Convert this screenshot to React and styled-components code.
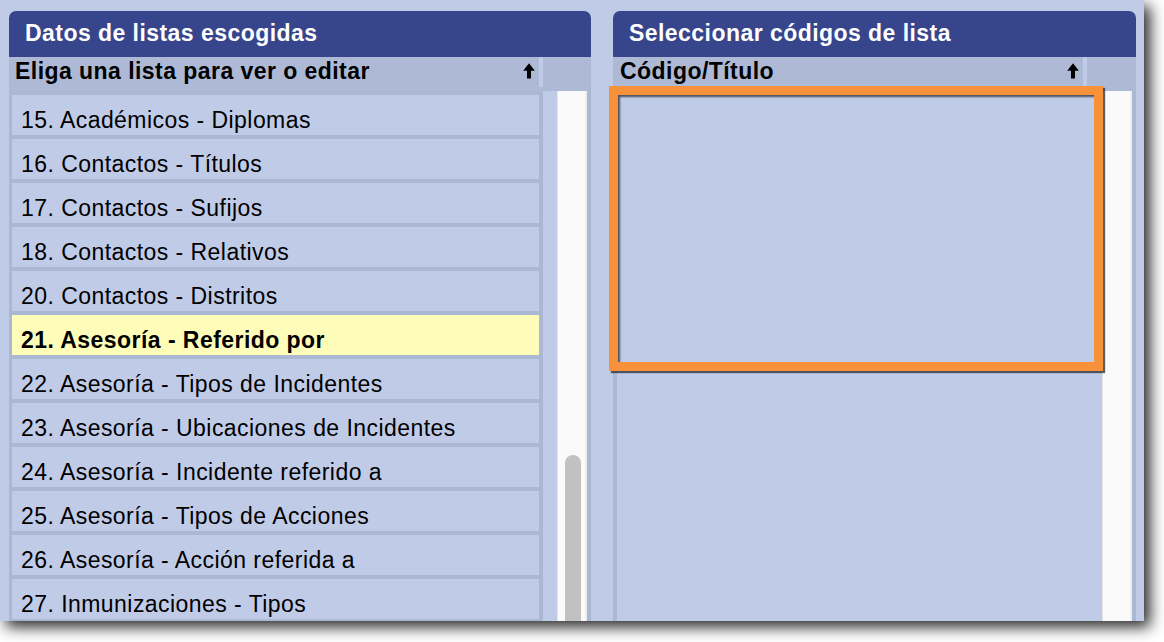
import React from "react";
import styled, { createGlobalStyle } from "styled-components";

const GlobalStyle = createGlobalStyle`
  html, body {
    margin: 0;
    padding: 0;
    background: #ffffff;
  }
  body {
    font-family: "Liberation Sans", Arial, sans-serif;
  }
`;

const lists = [
  "15. Académicos - Diplomas",
  "16. Contactos - Títulos",
  "17. Contactos - Sufijos",
  "18. Contactos - Relativos",
  "20. Contactos - Distritos",
  "21. Asesoría - Referido por",
  "22. Asesoría - Tipos de Incidentes",
  "23. Asesoría - Ubicaciones de Incidentes",
  "24. Asesoría - Incidente referido a",
  "25. Asesoría - Tipos de Acciones",
  "26. Asesoría - Acción referida a",
  "27. Inmunizaciones - Tipos",
];

const Page = styled.div`
  width: 1164px;
  height: 642px;
  overflow: hidden;
`;

const Window = styled.div`
  position: relative;
  width: 1144px;
  height: 621px;
  box-sizing: border-box;
  padding: 11px 8px 0 9px;
  background: #c0cbe8;
  box-shadow: 6px 6px 14px rgba(0, 0, 0, 0.85);
  overflow: hidden;
  display: grid;
  grid-template-columns: 582px 523px;
  column-gap: 22px;
`;

const Panel = styled.section`
  display: flex;
  flex-direction: column;
  min-height: 0;
`;

const TitleBar = styled.header`
  height: 46px;
  flex-shrink: 0;
  display: flex;
  align-items: center;
  padding: 0 16px 1px;
  box-sizing: border-box;
  background: #36458c;
  border-radius: 7px 7px 0 0;
  color: #ffffff;
  font-size: 23px;
  font-weight: 700;
  letter-spacing: 0.45px;
`;

const ColumnHeader = styled.div`
  height: 34px;
  flex-shrink: 0;
  display: flex;
  align-items: flex-start;
  background: #aeb9d5;
`;

const HeaderCell = styled.div`
  width: ${(p) => p.$width}px;
  height: 30px;
  box-sizing: border-box;
  display: flex;
  align-items: center;
  justify-content: space-between;
  padding: 0 4px 2px ${(p) => p.$indent}px;
  color: #000000;
  font-size: 23px;
  font-weight: 700;
  letter-spacing: 0.45px;
  white-space: nowrap;
`;

const Separator = styled.div`
  width: 4px;
  height: 30px;
  background: #bfcae8;
`;

const SortArrow = styled.svg`
  width: 12px;
  height: 16px;
  margin-bottom: 1px;
  flex-shrink: 0;
`;

const Body = styled.div`
  flex: 1;
  min-height: 0;
  display: flex;
`;

const ListArea = styled.div`
  width: 534px;
  box-sizing: border-box;
  padding: 4px 4px 0 3px;
  display: flex;
  flex-direction: column;
  gap: 4px;
  background: #acb7d3;
  overflow: hidden;
`;

const Row = styled.div`
  height: 40px;
  flex-shrink: 0;
  box-sizing: border-box;
  display: flex;
  align-items: center;
  padding: 10px 8px 0 9px;
  background: ${(p) => (p.$selected ? "#fefcb9" : "#c0cbe8")};
  color: #000000;
  font-size: 23px;
  font-weight: ${(p) => (p.$selected ? 700 : 400)};
  letter-spacing: 0.45px;
  white-space: nowrap;
`;

const Gutter = styled.div`
  width: 14px;
  background: #c0cbe8;
`;

const EdgeBorder = styled.div`
  width: 4px;
  background: #acb7d3;
`;

const EmptyList = styled.div`
  flex: 1;
  background: #c0cbe8;
`;

const Track = styled.div`
  width: 30px;
  box-sizing: border-box;
  padding: ${(p) => p.$thumbTop}px 0 0 8px;
  background: #fafafa;
  box-shadow: inset 1px 0 0 #e4e4e4, inset -2px 0 0 #efefef;
`;

const Thumb = styled.div`
  width: 16px;
  height: 100%;
  background: #c1c1c1;
  border-radius: 8px 8px 0 0;
`;

const Highlight = styled.div`
  position: absolute;
  left: 609px;
  top: 86px;
  width: 494px;
  height: 285px;
  box-sizing: border-box;
  border: 9px solid #f8923a;
  box-shadow: 2px 2px 1px rgba(40, 40, 50, 0.75),
    inset 2px 2px 2px rgba(40, 40, 50, 0.75);
  pointer-events: none;
`;

const Arrow = () => (
  <SortArrow viewBox="0 0 12 16">
    <path d="M6 0.3 L11.8 7.8 L8 7.8 L8 15.6 L4 15.6 L4 7.8 L0.2 7.8 Z" fill="#000" />
  </SortArrow>
);

const App = () => {
  return (
    <Page>
      <GlobalStyle />
      <Window>
        <Panel>
          <TitleBar>Datos de listas escogidas</TitleBar>
          <ColumnHeader>
            <HeaderCell $width={530} $indent={6}>
              Eliga una lista para ver o editar
              <Arrow />
            </HeaderCell>
            <Separator />
          </ColumnHeader>
          <Body>
            <ListArea>
              {lists.map((name) => (
                <Row key={name} $selected={name.startsWith("21.")}>
                  {name}
                </Row>
              ))}
            </ListArea>
            <Gutter />
            <Track $thumbTop={364}>
              <Thumb />
            </Track>
            <EdgeBorder />
          </Body>
        </Panel>

        <Panel>
          <TitleBar>Seleccionar códigos de lista</TitleBar>
          <ColumnHeader>
            <HeaderCell $width={470} $indent={7}>
              Código/Título
              <Arrow />
            </HeaderCell>
            <Separator />
          </ColumnHeader>
          <Body>
            <EdgeBorder />
            <EmptyList />
            <Track $thumbTop={0} />
            <EdgeBorder />
          </Body>
        </Panel>

        <Highlight />
      </Window>
    </Page>
  );
};

export default App;
